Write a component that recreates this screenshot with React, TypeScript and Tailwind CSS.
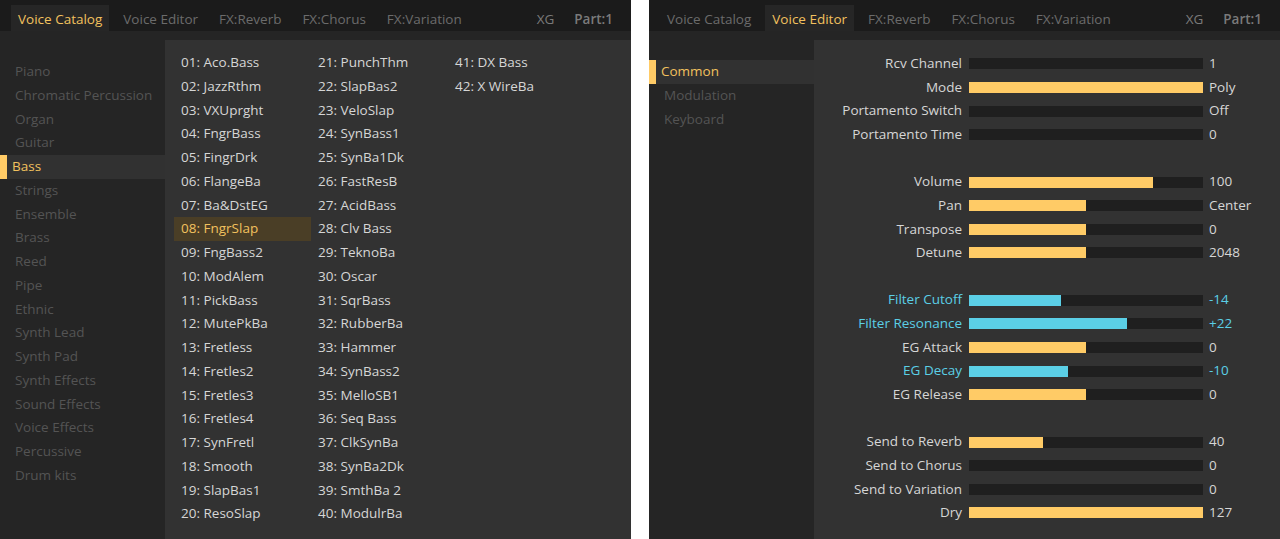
import React from "react";

const tabs = ["Voice Catalog", "Voice Editor", "FX:Reverb", "FX:Chorus", "FX:Variation"];

const categories = [
  "Piano", "Chromatic Percussion", "Organ", "Guitar", "Bass", "Strings", "Ensemble", "Brass", "Reed",
  "Pipe", "Ethnic", "Synth Lead", "Synth Pad", "Synth Effects", "Sound Effects", "Voice Effects",
  "Percussive", "Drum kits",
];

const voices = [
  "Aco.Bass", "JazzRthm", "VXUprght", "FngrBass", "FingrDrk", "FlangeBa", "Ba&DstEG", "FngrSlap",
  "FngBass2", "ModAlem", "PickBass", "MutePkBa", "Fretless", "Fretles2", "Fretles3", "Fretles4",
  "SynFretl", "Smooth", "SlapBas1", "ResoSlap", "PunchThm", "SlapBas2", "VeloSlap", "SynBass1",
  "SynBa1Dk", "FastResB", "AcidBass", "Clv Bass", "TeknoBa", "Oscar", "SqrBass", "RubberBa",
  "Hammer", "SynBass2", "MelloSB1", "Seq Bass", "ClkSynBa", "SynBa2Dk", "SmthBa 2", "ModulrBa",
  "DX Bass", "X WireBa",
];

type Param = { label: string; value: string; fill: number; cyan?: boolean } | null;

const params: Param[] = [
  { label: "Rcv Channel", value: "1", fill: 0 },
  { label: "Mode", value: "Poly", fill: 1 },
  { label: "Portamento Switch", value: "Off", fill: 0 },
  { label: "Portamento Time", value: "0", fill: 0 },
  null,
  { label: "Volume", value: "100", fill: 100 / 127 },
  { label: "Pan", value: "Center", fill: 0.5 },
  { label: "Transpose", value: "0", fill: 0.5 },
  { label: "Detune", value: "2048", fill: 0.5 },
  null,
  { label: "Filter Cutoff", value: "-14", fill: 50 / 127, cyan: true },
  { label: "Filter Resonance", value: "+22", fill: 86 / 127, cyan: true },
  { label: "EG Attack", value: "0", fill: 0.5 },
  { label: "EG Decay", value: "-10", fill: 54 / 127, cyan: true },
  { label: "EG Release", value: "0", fill: 0.5 },
  null,
  { label: "Send to Reverb", value: "40", fill: 40 / 127 },
  { label: "Send to Chorus", value: "0", fill: 0 },
  { label: "Send to Variation", value: "0", fill: 0 },
  { label: "Dry", value: "127", fill: 1 },
];

function TabBar({ active }: { active: number }) {
  return (
    <div className="flex h-[31px] shrink-0 items-end bg-[#1b1b1b] pl-[11px] pr-[18px]">
      <div className="flex gap-[7px]">
        {tabs.map((t, i) => (
          <div
            key={t}
            className={
              i === active
                ? "flex h-[26px] items-center bg-[#262626] px-[7px] pt-[3px] text-[#f2c15e]"
                : "flex h-[26px] items-center px-[7px] pt-[3px] text-[#6b6b6b]"
            }
          >
            {t}
          </div>
        ))}
      </div>
      <div className="ml-auto flex h-[26px] items-center gap-[20px] pt-[3px] text-[#7a7a7a]">
        <span>XG</span>
        <span className="font-semibold">Part:1</span>
      </div>
    </div>
  );
}

function Sidebar({ items, selected }: { items: string[]; selected: number }) {
  return (
    <div className="w-[165px] shrink-0 pt-[29px]">
      {items.map((c, i) =>
        i === selected ? (
          <div key={c} className="flex h-[23.75px] items-center bg-[#313131]">
            <div className="h-full w-[7px] bg-[#ffcb66]" />
            <span className="pl-[5px] text-[#f2c15e]">{c}</span>
          </div>
        ) : (
          <div key={c} className="flex h-[23.75px] items-center pl-[15px] text-[#545454]">
            {c}
          </div>
        )
      )}
    </div>
  );
}

function Catalog() {
  return (
    <div className="flex h-full w-[631px] flex-col bg-[#252525]">
      <TabBar active={0} />
      <div className="flex flex-1">
        <Sidebar items={categories} selected={4} />
        <div className="mt-[9px] flex-1 bg-[#323232] pl-[9px] pt-[11px]">
          <div className="grid grid-flow-col grid-cols-[137px_137px_137px] grid-rows-[repeat(20,23.75px)]">
            {voices.map((v, i) => {
              const n = String(i + 1).padStart(2, "0");
              return (
                <div
                  key={n}
                  className={
                    i === 7
                      ? "flex items-center bg-[#4a3e26] px-[7px] text-[#f2c15e]"
                      : "flex items-center px-[7px] text-[#d6d6d6]"
                  }
                >
                  {n}: {v}
                </div>
              );
            })}
          </div>
        </div>
      </div>
    </div>
  );
}

function Editor() {
  return (
    <div className="flex h-full w-[631px] flex-col bg-[#252525]">
      <TabBar active={1} />
      <div className="flex flex-1">
        <Sidebar items={["Common", "Modulation", "Keyboard"]} selected={0} />
        <div className="mt-[9px] flex-1 bg-[#323232] pt-[12px]">
          {params.map((p, i) =>
            p ? (
              <div key={p.label} className="flex h-[23.65px] items-center">
                <div
                  className={
                    p.cyan
                      ? "w-[148px] text-right text-[#5bcfe6]"
                      : "w-[148px] text-right text-[#d6d6d6]"
                  }
                >
                  {p.label}
                </div>
                <div className="ml-[7px] h-[11px] w-[234px] bg-[#1f1f1f]">
                  <div
                    className={p.cyan ? "h-full bg-[#5bcfe6]" : "h-full bg-[#ffcb66]"}
                    style={{ width: `${p.fill * 100}%` }}
                  />
                </div>
                <div className={p.cyan ? "ml-[6px] text-[#5bcfe6]" : "ml-[6px] text-[#d6d6d6]"}>
                  {p.value}
                </div>
              </div>
            ) : (
              <div key={i} className="h-[23.65px]" />
            )
          )}
        </div>
      </div>
    </div>
  );
}

export default function App() {
  return (
    <div
      className="flex h-[539px] w-[1280px] gap-[18px] overflow-hidden bg-white text-[13.5px] leading-none"
      style={{ fontFamily: '"Open Sans", "Noto Sans", sans-serif' }}
    >
      <Catalog />
      <Editor />
    </div>
  );
}
